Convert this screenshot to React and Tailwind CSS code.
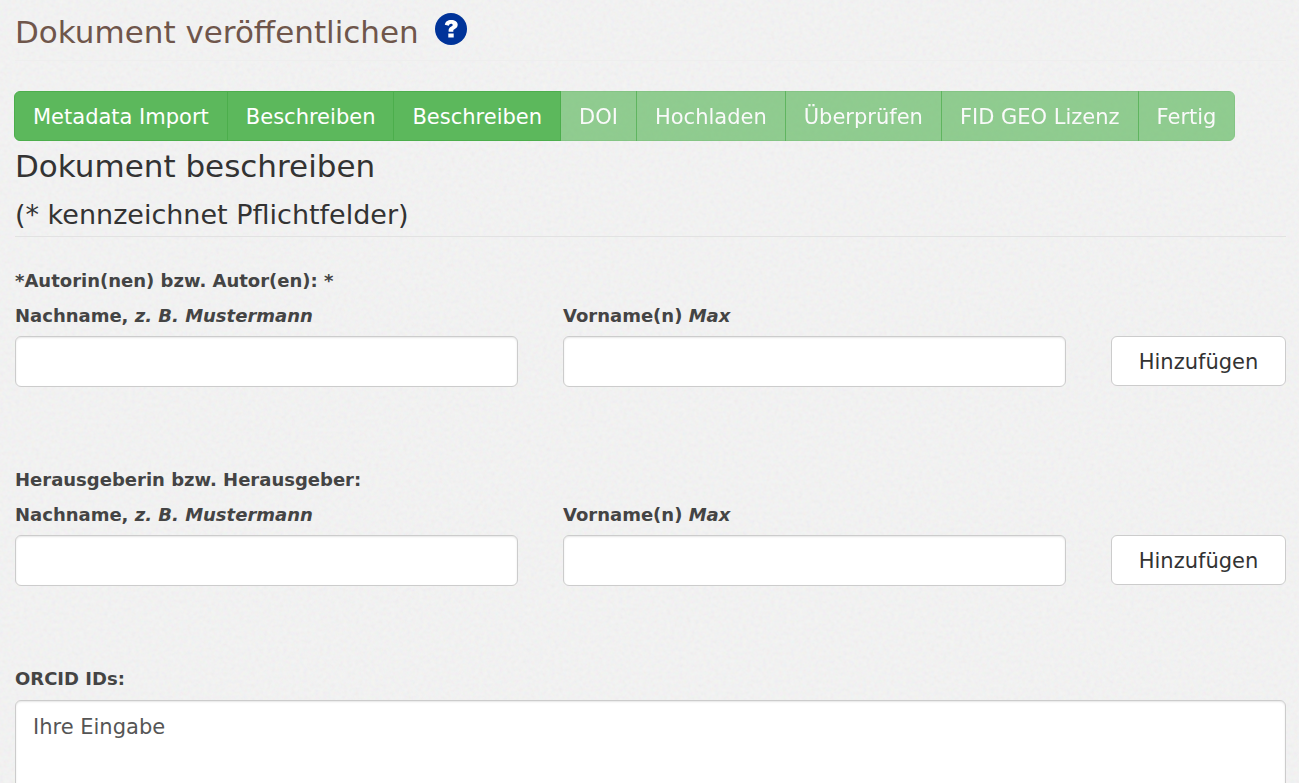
const steps = [
  { label: 'Metadata Import', done: true },
  { label: 'Beschreiben', done: true },
  { label: 'Beschreiben', done: true },
  { label: 'DOI', done: false },
  { label: 'Hochladen', done: false },
  { label: 'Überprüfen', done: false },
  { label: 'FID GEO Lizenz', done: false },
  { label: 'Fertig', done: false },
];

const inputClass =
  'block h-[51px] w-full rounded-md border border-[#ccc] bg-white px-[17px] text-[21px] text-[#555] shadow-[inset_0_1px_2px_rgba(0,0,0,0.1)] outline-none focus:border-[#66afe9]';

function PaperTexture() {
  return (
    <svg className="pointer-events-none absolute inset-0 h-full w-full opacity-[0.06]" aria-hidden="true">
      <filter id="paper">
        <feTurbulence type="fractalNoise" baseFrequency="0.25" numOctaves="3" seed="4" stitchTiles="stitch" />
        <feColorMatrix type="matrix" values="1 0 0 0 0  0 1 0 0 0  0 0 1 0 0  0 0 0 0 1" />
      </filter>
      <rect width="100%" height="100%" filter="url(#paper)" />
    </svg>
  );
}

function HelpIcon() {
  return (
    <svg viewBox="0 0 32 32" className="h-8 w-8" aria-hidden="true">
      <circle cx="16" cy="16" r="16" fill="#003399" />
      <path
        d="M9.800 11.800C10.400 8.300 12.600 6.900 16.200 6.900c3.700 0 6.500 1.800 6.500 4.900 0 2.300-1.500 3.300-2.900 4.200-1.100.7-1.500 1-1.500 1.900v.8h-4.700v-1.200c0-2 1-3 2.600-4 1-.6 1.500-1 1.500-1.600 0-.8-.7-1.200-1.700-1.200-1.200 0-1.800.7-2.200 2zM13.300 20.600h5.400V24.400h-5.400z"
        fill="#fff"
      />
    </svg>
  );
}

function PersonFields({ id, title }) {
  return (
    <fieldset className="pb-[80px]">
      <legend className="text-lg leading-[26px] font-bold">{title}</legend>
      <div className="grid grid-cols-[1fr_1fr_175px] items-end gap-x-[45px] pt-[9px]">
        <div>
          <label htmlFor={`${id}-last`} className="block pb-[7px] text-lg leading-[26px] font-bold">
            Nachname, <em>z. B. Mustermann</em>
          </label>
          <input id={`${id}-last`} type="text" className={inputClass} />
        </div>
        <div>
          <label htmlFor={`${id}-first`} className="block pb-[7px] text-lg leading-[26px] font-bold">
            Vorname(n) <em>Max</em>
          </label>
          <input id={`${id}-first`} type="text" className={inputClass} />
        </div>
        <button
          type="button"
          className="mb-px h-[50px] rounded-md border border-[#ccc] bg-white pt-[3px] text-[21px] text-[#333] hover:bg-[#e6e6e6]"
        >
          Hinzufügen
        </button>
      </div>
    </fieldset>
  );
}

export default function App() {
  return (
    <div className="relative min-h-screen overflow-hidden bg-[#f5f5f5] font-['Verdana','DejaVu_Sans',sans-serif] text-[#444]">
      <PaperTexture />
      <main className="relative pr-[13px] pl-[15px]">
        <header className="flex h-[61px] items-start gap-4 border-b border-[#eee] pt-3">
          <h1 className="text-[31px] leading-10 text-[#6f564b]">Dokument veröffentlichen</h1>
          <a href="#hilfe" aria-label="Hilfe" className="pt-px">
            <HelpIcon />
          </a>
        </header>

        <nav aria-label="Schritte" className="-ml-px flex pt-[30px]">
          {steps.map((step, i) => (
            <button
              key={i}
              type="button"
              disabled={!step.done}
              className="-ml-px h-[50px] border border-[#4cae4c] bg-[#5cb85c] px-[18px] pt-1 text-[21px] text-white first:ml-0 first:rounded-l-md last:rounded-r-md disabled:opacity-65"
            >
              {step.label}
            </button>
          ))}
        </nav>

        <h2 className="pt-[5px] text-[31px] leading-10 text-[#333]">Dokument beschreiben</h2>
        <h3 className="mb-[31px] border-b border-[#e2e2e2] pt-[13px] pb-[5px] text-[27px] leading-8 text-[#333]">
          (* kennzeichnet Pflichtfelder)
        </h3>

        <form>
          <PersonFields id="author" title="*Autorin(nen) bzw. Autor(en): *" />
          <PersonFields id="editor" title="Herausgeberin bzw. Herausgeber:" />
          <label htmlFor="orcid" className="block pb-2 text-lg leading-[26px] font-bold">
            ORCID IDs:
          </label>
          <textarea
            id="orcid"
            rows={4}
            defaultValue="Ihre Eingabe"
            className="block w-full resize-none rounded-md border border-[#ccc] bg-white px-[17px] py-[11px] text-[21px] leading-[30px] text-[#555] shadow-[inset_0_1px_2px_rgba(0,0,0,0.1)] outline-none"
          />
        </form>
      </main>
    </div>
  );
}
